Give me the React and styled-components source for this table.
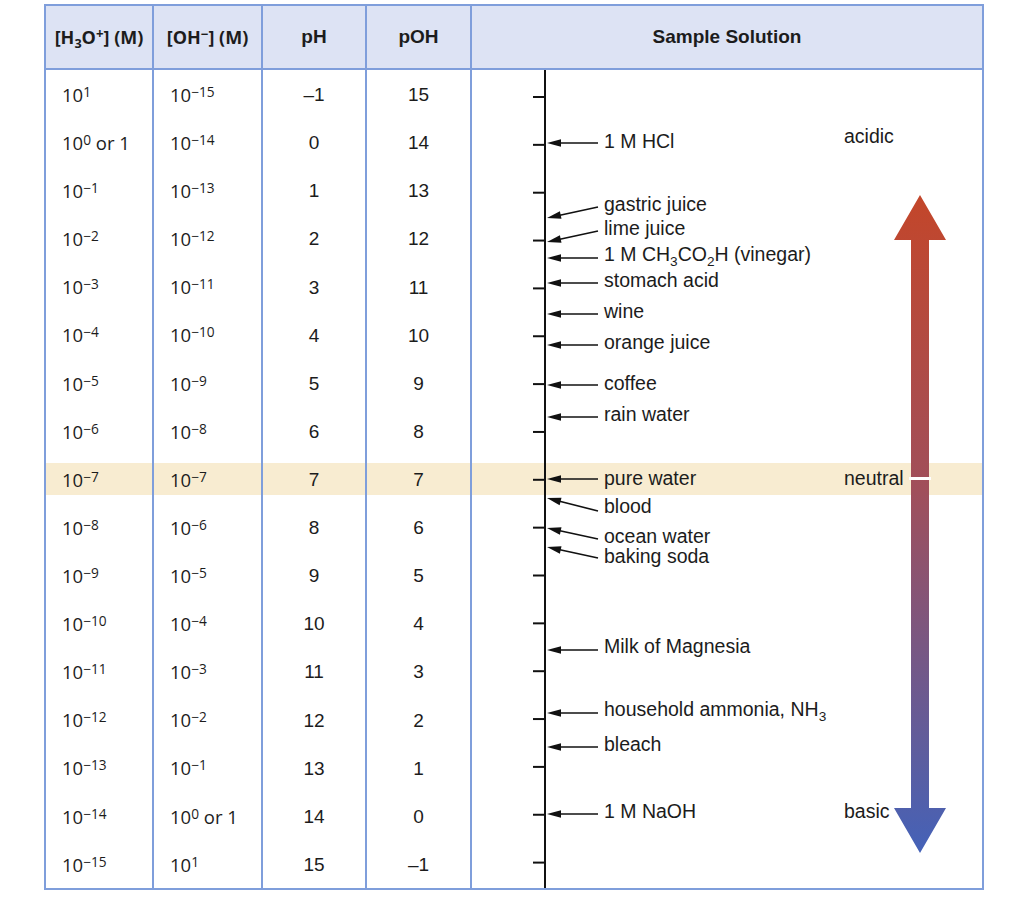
import React from 'react';
import styled, { createGlobalStyle } from 'styled-components';

const BORDER = '#7f9edb';
const COLS = '108px 109px 104px 105px 510px';
const X0 = 472;
const Y0 = 70;

const GlobalStyle = createGlobalStyle`
  html, body { margin: 0; padding: 0; background: #ffffff; }
  body { font-family: "Liberation Sans", Arial, sans-serif; color: #1c1c1c; }
`;

const Page = styled.div`
  width: 1024px;
  height: 897px;
  box-sizing: border-box;
  padding: 4px 0 0 44px;
`;

const Table = styled.div`
  width: 940px;
  box-sizing: border-box;
  border: 2px solid ${BORDER};
`;

const HeaderRow = styled.div`
  display: grid;
  grid-template-columns: ${COLS};
  height: 64px;
  box-sizing: border-box;
  border-bottom: 2px solid ${BORDER};
  background: #dde3f4;
`;

const HeaderCell = styled.div`
  display: flex;
  align-items: center;
  justify-content: center;
  box-sizing: border-box;
  border-right: ${(p) => (p.$last ? 'none' : `2px solid ${BORDER}`)};
  font-family: ${(p) => (p.$alt ? '"Open Sans", "Liberation Sans", sans-serif' : '"Liberation Sans", Arial, sans-serif')};
  font-weight: 700;
  font-size: ${(p) => (p.$alt ? '18px' : '19px')};
  white-space: nowrap;
`;

const Text = styled.span`
  display: inline-block;
  line-height: 1;
`;

const Body = styled.div`
  display: grid;
  grid-template-columns: ${COLS};
  grid-template-rows: repeat(17, 1fr);
  height: 818px;
`;

const Band = styled.div`
  grid-row: 9;
  grid-column: 1 / -1;
  align-self: center;
  height: 32px;
  background: #f8ecd1;
`;

const Cell = styled.div`
  grid-row: ${(p) => p.$row};
  grid-column: ${(p) => p.$col};
  display: flex;
  align-items: center;
  justify-content: ${(p) => (p.$center ? 'center' : 'flex-start')};
  padding-left: ${(p) => (p.$center ? '0' : '16px')};
  padding-top: 2px;
  box-sizing: border-box;
  border-right: 2px solid ${BORDER};
  font-family: ${(p) => (p.$alt ? '"Open Sans", "Liberation Sans", sans-serif' : '"Liberation Sans", Arial, sans-serif')};
  font-size: ${(p) => (p.$alt ? '18.5px' : '19px')};
  white-space: nowrap;
`;

const Sup = styled.sup`
  font-size: 0.74em;
  line-height: 0;
  vertical-align: 0.4em;
`;

const Sub = styled.sub`
  font-size: 0.7em;
  line-height: 0;
  vertical-align: -0.32em;
`;

const Diagram = styled.div`
  grid-column: 5;
  grid-row: 1 / -1;
  position: relative;
`;

const Canvas = styled.svg`
  display: block;
  width: 510px;
  height: 818px;
`;

const Label = styled.span`
  position: absolute;
  left: ${(p) => p.$x}px;
  top: ${(p) => p.$y}px;
  transform: translateY(-50%);
  font-size: 19.5px;
  line-height: 0.9;
  white-space: nowrap;
`;

const exp = (n) => (n < 0 ? `−${-n}` : `${n}`);
const num = (n) => (n < 0 ? `–${-n}` : `${n}`);

const Power = ({ e }) => (
  <Text>
    10<Sup>{exp(e)}</Sup>
    {e === 0 ? ' or 1' : ''}
  </Text>
);

const rows = Array.from({ length: 17 }, (_, k) => {
  const pH = k - 1;
  return { pH, h: -pH, oh: pH - 14, pOH: 14 - pH };
});

const samples = [
  { text: '1 M HCl', ly: 142, from: 143, to: 143 },
  { text: 'gastric juice', ly: 205, from: 207, to: 218 },
  { text: 'lime juice', ly: 229, from: 231, to: 242 },
  {
    text: (
      <>
        1 M CH<Sub>3</Sub>CO<Sub>2</Sub>H (vinegar)
      </>
    ),
    ly: 255,
    from: 258,
    to: 258,
  },
  { text: 'stomach acid', ly: 281, from: 283, to: 283 },
  { text: 'wine', ly: 312, from: 314, to: 314 },
  { text: 'orange juice', ly: 343, from: 345, to: 345 },
  { text: 'coffee', ly: 384, from: 385, to: 385 },
  { text: 'rain water', ly: 415, from: 417, to: 417 },
  { text: 'pure water', ly: 479, from: 479, to: 479 },
  { text: 'blood', ly: 507, from: 511, to: 498 },
  { text: 'ocean water', ly: 537, from: 539, to: 528 },
  { text: 'baking soda', ly: 557, from: 558, to: 547 },
  { text: 'Milk of Magnesia', ly: 647, from: 650, to: 650 },
  {
    text: (
      <>
        household ammonia, NH<Sub>3</Sub>
      </>
    ),
    ly: 710,
    from: 713,
    to: 713,
  },
  { text: 'bleach', ly: 745, from: 747, to: 747 },
  { text: '1 M NaOH', ly: 812, from: 814, to: 814 },
];

const Arrow = ({ x1, y1, x2, y2 }) => {
  const dx = x2 - x1;
  const dy = y2 - y1;
  const len = Math.hypot(dx, dy);
  const ux = dx / len;
  const uy = dy / len;
  const hl = 14;
  const hw = 3.8;
  const bx = x2 - ux * hl;
  const by = y2 - uy * hl;
  const px = -uy;
  const py = ux;
  return (
    <g>
      <line x1={x1} y1={y1} x2={bx + ux * 2} y2={by + uy * 2} stroke="#111" strokeWidth="1.6" />
      <polygon
        points={`${x2},${y2} ${bx + px * hw},${by + py * hw} ${bx - px * hw},${by - py * hw}`}
        fill="#111"
      />
    </g>
  );
};

const ticks = Array.from({ length: 17 }, (_, k) => 27 + 47.85 * k);

export default function App() {
  return (
    <>
      <GlobalStyle />
      <Page>
        <Table>
          <HeaderRow>
            <HeaderCell $alt>
              <Text>
                [H<Sub>3</Sub>O<Sup>+</Sup>] (M)
              </Text>
            </HeaderCell>
            <HeaderCell $alt>
              <Text>
                [OH<Sup>−</Sup>] (M)
              </Text>
            </HeaderCell>
            <HeaderCell>pH</HeaderCell>
            <HeaderCell>pOH</HeaderCell>
            <HeaderCell $last>Sample Solution</HeaderCell>
          </HeaderRow>
          <Body>
            <Band />
            {rows.map((r, i) => (
              <React.Fragment key={i}>
                <Cell $row={i + 1} $col={1} $alt>
                  <Power e={r.h} />
                </Cell>
                <Cell $row={i + 1} $col={2} $alt>
                  <Power e={r.oh} />
                </Cell>
                <Cell $row={i + 1} $col={3} $center>
                  {num(r.pH)}
                </Cell>
                <Cell $row={i + 1} $col={4} $center>
                  {num(r.pOH)}
                </Cell>
              </React.Fragment>
            ))}
            <Diagram>
              <Canvas viewBox="0 0 510 818">
                <defs>
                  <linearGradient id="phgrad" x1="0" y1="125" x2="0" y2="783" gradientUnits="userSpaceOnUse">
                    <stop offset="0" stopColor="#c3462a" />
                    <stop offset="0.45" stopColor="#a04f5b" />
                    <stop offset="1" stopColor="#4462b8" />
                  </linearGradient>
                </defs>
                <line x1="73" y1="0" x2="73" y2="818" stroke="#111" strokeWidth="2" />
                {ticks.map((y, i) => (
                  <line key={i} x1="61" y1={y} x2="73" y2={y} stroke="#111" strokeWidth="2" />
                ))}
                {samples.map((s, i) => (
                  <Arrow key={i} x1={598 - X0} y1={s.from - Y0} x2={75} y2={s.to - Y0} />
                ))}
                <polygon
                  points="448,125 474,170 457,170 457,738 474,738 448,783 422,738 439,738 439,170 422,170"
                  fill="url(#phgrad)"
                />
                <rect x="437" y="407" width="22" height="3" fill="#ffffff" />
              </Canvas>
              {samples.map((s, i) => (
                <Label key={i} $x={604 - X0} $y={s.ly - Y0}>
                  {s.text}
                </Label>
              ))}
              <Label $x={372} $y={137 - Y0}>acidic</Label>
              <Label $x={372} $y={479 - Y0}>neutral</Label>
              <Label $x={372} $y={812 - Y0}>basic</Label>
            </Diagram>
          </Body>
        </Table>
      </Page>
    </>
  );
}
